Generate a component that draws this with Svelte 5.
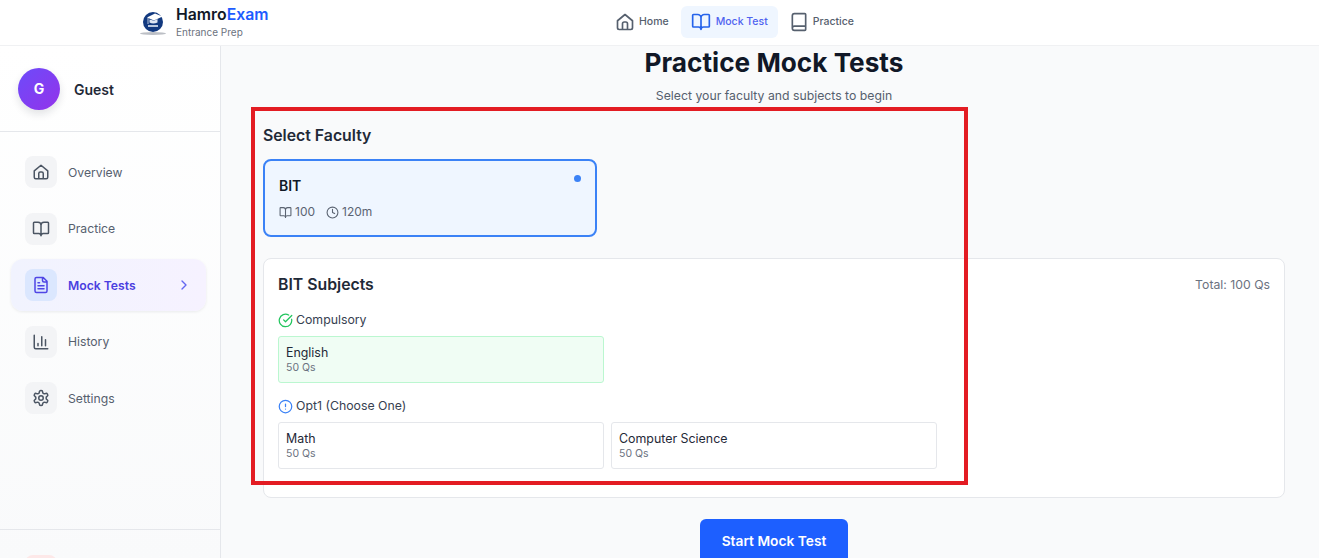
<script>
  const navLinks = [
    { label: 'Home', icon: 'home' },
    { label: 'Mock Test', icon: 'open', active: true },
    { label: 'Practice', icon: 'book' }
  ];

  const sideLinks = [
    { label: 'Overview', icon: 'home' },
    { label: 'Practice', icon: 'open' },
    { label: 'Mock Tests', icon: 'file', active: true },
    { label: 'History', icon: 'chart' },
    { label: 'Settings', icon: 'gear' }
  ];

  const icons = {
    home: 'M3 10.5 12 3l9 7.5V19a2 2 0 0 1-2 2H5a2 2 0 0 1-2-2Z M9 21v-7a2 2 0 0 1 2-2h2a2 2 0 0 1 2 2v7',
    open: 'M12 7v14 M3 18a1 1 0 0 1-1-1V4a1 1 0 0 1 1-1h5a4 4 0 0 1 4 4 4 4 0 0 1 4-4h5a1 1 0 0 1 1 1v13a1 1 0 0 1-1 1h-6a3 3 0 0 0-3 3 3 3 0 0 0-3-3Z',
    book: 'M4 19.5v-15A2.5 2.5 0 0 1 6.5 2H19a1 1 0 0 1 1 1v18a1 1 0 0 1-1 1H6.5a2.5 2.5 0 0 1 0-5H20',
    file: 'M15 2H6a2 2 0 0 0-2 2v16a2 2 0 0 0 2 2h12a2 2 0 0 0 2-2V7Z M14 2v4a2 2 0 0 0 2 2h4 M10 9H8 M16 13H8 M16 17H8',
    chart: 'M3 3v16a2 2 0 0 0 2 2h16 M8 17v-3 M13 17V5 M18 17V9',
    gear: 'M12.22 2h-.44a2 2 0 0 0-2 2v.18a2 2 0 0 1-1 1.73l-.43.25a2 2 0 0 1-2 0l-.15-.08a2 2 0 0 0-2.73.73l-.22.38a2 2 0 0 0 .73 2.73l.15.1a2 2 0 0 1 1 1.72v.51a2 2 0 0 1-1 1.74l-.15.09a2 2 0 0 0-.73 2.73l.22.38a2 2 0 0 0 2.73.73l.15-.08a2 2 0 0 1 2 0l.43.25a2 2 0 0 1 1 1.73V20a2 2 0 0 0 2 2h.44a2 2 0 0 0 2-2v-.18a2 2 0 0 1 1-1.73l.43-.25a2 2 0 0 1 2 0l.15.08a2 2 0 0 0 2.73-.73l.22-.39a2 2 0 0 0-.73-2.73l-.15-.08a2 2 0 0 1-1-1.74v-.5a2 2 0 0 1 1-1.74l.15-.09a2 2 0 0 0 .73-2.73l-.22-.38a2 2 0 0 0-2.73-.73l-.15.08a2 2 0 0 1-2 0l-.43-.25a2 2 0 0 1-1-1.73V4a2 2 0 0 0-2-2Z M15 12a3 3 0 1 1-6 0 3 3 0 0 1 6 0Z',
    clock: 'M22 12a10 10 0 1 1-20 0 10 10 0 0 1 20 0Z M12 6v6l4 2',
    check: 'M21.8 10A10 10 0 1 1 17 3.3 M9 11l3 3L22 4',
    alert: 'M22 12a10 10 0 1 1-20 0 10 10 0 0 1 20 0Z M12 8v4 M12 16h.01',
    chevron: 'm9 18 6-6-6-6'
  };
</script>

{#snippet icon(name, size)}
  <svg width={size} height={size} viewBox="0 0 24 24" fill="none" stroke="currentColor" stroke-width="2" stroke-linecap="round" stroke-linejoin="round">
    <path d={icons[name]} />
  </svg>
{/snippet}

<div class="page">
  <header class="topbar">
    <div class="brand">
      <svg class="logo" width="30" height="30" viewBox="0 0 30 30">
        <ellipse cx="14" cy="25.500" rx="13" ry="1.500" fill="#8f959e" opacity="0.6" />
        <circle cx="14" cy="14" r="10" fill="#12397f" />
        <path d="M8 9.500 16 5.500 23.500 8.500 15 12.500Z" fill="#fff" />
        <path d="M10.500 11.500v3c2.500 1.300 5 1.300 8 0v-3.500l-3.500 1.800Z" fill="#dfe6f2" />
        <path d="M9 10v6" stroke="#fff" stroke-width="0.700" />
        <rect x="9" y="17" width="10" height="2" fill="#b9c7de" />
      </svg>
      <div>
        <div class="brand-name">Hamro<span>Exam</span></div>
        <div class="brand-sub">Entrance Prep</div>
      </div>
    </div>
    <nav class="topnav">
      {#each navLinks as link}
        <div class="toplink" class:active={link.active}>
          {@render icon(link.icon, 20)}
          <span>{link.label}</span>
        </div>
      {/each}
    </nav>
  </header>

  <div class="body">
    <aside class="sidebar">
      <div class="user">
        <div class="avatar">G</div>
        <div class="username">Guest</div>
      </div>
      <nav class="sidenav">
        {#each sideLinks as link}
          <div class="sidelink" class:active={link.active}>
            <div class="sideicon">{@render icon(link.icon, 18)}</div>
            <span>{link.label}</span>
            {#if link.active}
              <div class="chev">{@render icon('chevron', 16)}</div>
            {/if}
          </div>
        {/each}
      </nav>
      <div class="sidefoot">
        <div class="logout"></div>
      </div>
    </aside>

    <main class="main">
      <h1>Practice Mock Tests</h1>
      <p class="lead">Select your faculty and subjects to begin</p>

      <h2>Select Faculty</h2>
      <div class="faculty">
        <div class="fac-card">
          <div class="fac-name">BIT</div>
          <div class="fac-meta">
            <span>{@render icon('open', 13)} 100</span>
            <span>{@render icon('clock', 13)} 120m</span>
          </div>
          <i class="dot"></i>
        </div>
      </div>

      <section class="subjects">
        <div class="subj-head">
          <h3>BIT Subjects</h3>
          <span>Total: 100 Qs</span>
        </div>

        <div class="group-label">
          <span class="green">{@render icon('check', 15)}</span>
          Compulsory
        </div>
        <div class="grid">
          <div class="subject picked">
            <div class="subject-name">English</div>
            <div class="subject-qs">50 Qs</div>
          </div>
        </div>

        <div class="group-label second">
          <span class="blue">{@render icon('alert', 15)}</span>
          Opt1 (Choose One)
        </div>
        <div class="grid">
          <div class="subject">
            <div class="subject-name">Math</div>
            <div class="subject-qs">50 Qs</div>
          </div>
          <div class="subject">
            <div class="subject-name">Computer Science</div>
            <div class="subject-qs">50 Qs</div>
          </div>
        </div>
      </section>

      <div class="actions">
        <button class="start">Start Mock Test</button>
      </div>
    </main>
  </div>

  <div class="annotation"></div>
</div>

<style>
  :global(body) {
    margin: 0;
    overflow: hidden;
  }

  .page {
    position: relative;
    width: 1319px;
    height: 558px;
    overflow: hidden;
    background: #f9fafb;
    font-family: Inter, 'Liberation Sans', sans-serif;
    color: #111827;
  }

  .topbar {
    height: 46px;
    box-sizing: border-box;
    display: flex;
    align-items: center;
    background: #fff;
    border-bottom: 1px solid #f0f1f3;
    padding-left: 139px;
  }

  .brand {
    display: flex;
    align-items: center;
    gap: 7px;
    width: 461px;
  }

  .logo {
    flex: none;
  }

  .brand-name {
    font-size: 15.800px;
    font-weight: 600;
    line-height: 18px;
    color: #111827;
  }

  .brand-name span {
    color: #1d5cff;
  }

  .brand-sub {
    font-size: 10px;
    line-height: 13px;
    color: #6b7280;
    margin-top: 2px;
  }

  .topnav {
    display: flex;
    align-items: center;
    gap: 3px;
    margin-top: -1px;
  }

  .toplink {
    display: flex;
    align-items: center;
    gap: 5px;
    height: 32px;
    padding: 0 10px;
    border-radius: 6px;
    font-size: 10.500px;
    font-weight: 500;
    color: #56606e;
  }

  .toplink span {
    margin-top: -2px;
  }

  .toplink:first-child {
    padding-left: 15px;
    padding-right: 9px;
    gap: 4px;
  }

  .toplink:last-child {
    padding-left: 8px;
    gap: 4px;
  }

  .toplink.active {
    background: #eff6ff;
    color: #2563eb;
  }

  .toplink.active span {
    color: #4f63f0;
  }

  .body {
    display: flex;
    height: 512px;
  }

  .sidebar {
    width: 221px;
    flex: none;
    box-sizing: border-box;
    display: flex;
    flex-direction: column;
    background: linear-gradient(180deg, #ffffff, #f9fafb);
    border-right: 1px solid #e5e7eb;
  }

  .user {
    height: 86px;
    box-sizing: border-box;
    display: flex;
    align-items: center;
    gap: 14px;
    padding: 0 18px;
    border-bottom: 1px solid #e5e7eb;
  }

  .avatar {
    width: 42px;
    height: 42px;
    border-radius: 50%;
    display: flex;
    align-items: center;
    justify-content: center;
    background: linear-gradient(135deg, #6d4bfa, #9333ea);
    color: #fff;
    font-size: 14px;
    font-weight: 700;
    box-shadow: 0 4px 8px rgba(17, 24, 39, 0.12);
  }

  .username {
    font-size: 14px;
    font-weight: 600;
    color: #1f2937;
    margin-top: 2px;
  }

  .sidenav {
    flex: 1;
    padding: 14px 14px 0 11px;
    display: flex;
    flex-direction: column;
    gap: 4.500px;
  }

  .sidelink {
    height: 52px;
    display: flex;
    align-items: center;
    gap: 11px;
    padding: 0 14px;
    border-radius: 12px;
    font-size: 12.200px;
    color: #56606e;
  }

  .sidelink.active {
    background: linear-gradient(90deg, #f1f3fe, #f6f2ff);
    box-shadow: 0 1px 3px rgba(17, 24, 39, 0.08);
    color: #4a3fe0;
    font-weight: 600;
  }

  .sideicon {
    width: 32px;
    height: 32px;
    border-radius: 8px;
    background: #f3f4f6;
    display: flex;
    align-items: center;
    justify-content: center;
    color: #4b5563;
  }

  .active .sideicon {
    background: #dbe7fe;
    color: #4f46e5;
  }

  .chev {
    margin-left: auto;
    display: flex;
    color: #6366f1;
  }

  .sidefoot {
    height: 29px;
    box-sizing: border-box;
    border-top: 1px solid #e5e7eb;
    padding: 25px 0 0 25px;
    overflow: hidden;
  }

  .logout {
    width: 32px;
    height: 32px;
    border-radius: 8px;
    background: #fde8e8;
  }

  .main {
    flex: 1;
    min-width: 0;
    padding: 0 34px 0 42px;
  }

  h1 {
    margin: 0;
    text-align: center;
    font-size: 26.200px;
    line-height: 34px;
    font-weight: 700;
    color: #111827;
  }

  .lead {
    margin: 8px 0 0;
    text-align: center;
    font-size: 12.250px;
    line-height: 16px;
    color: #56606e;
  }

  h2 {
    margin: 22px 0 0;
    font-size: 15.800px;
    line-height: 20px;
    font-weight: 600;
    color: #1f2937;
  }

  .faculty {
    margin-top: 13px;
    display: grid;
    grid-template-columns: repeat(3, 1fr);
    gap: 10px;
  }

  .fac-card {
    position: relative;
    height: 78px;
    box-sizing: border-box;
    padding: 16px 14px;
    background: #eff6ff;
    border: 2px solid #3b82f6;
    border-radius: 8px;
  }

  .fac-name {
    font-size: 14px;
    line-height: 17px;
    font-weight: 600;
    color: #111827;
  }

  .fac-meta {
    display: flex;
    gap: 11px;
    margin-top: 10px;
    font-size: 12px;
    line-height: 16px;
    color: #5b6472;
  }

  .fac-meta span {
    display: flex;
    align-items: center;
    gap: 3px;
  }

  .dot {
    position: absolute;
    top: 14px;
    right: 14px;
    width: 7px;
    height: 7px;
    border-radius: 50%;
    background: #3b82f6;
  }

  .subjects {
    margin-top: 21px;
    height: 240px;
    box-sizing: border-box;
    padding: 15px 14px;
    background: #fff;
    border: 1px solid #e5e7eb;
    border-radius: 8px;
  }

  .subj-head {
    display: flex;
    justify-content: space-between;
    align-items: center;
    height: 20px;
  }

  h3 {
    margin: 0;
    font-size: 15.800px;
    font-weight: 600;
    color: #1f2937;
  }

  .subj-head span {
    font-size: 12.250px;
    color: #6b7280;
  }

  .group-label {
    display: flex;
    align-items: center;
    gap: 3px;
    margin-top: 18px;
    font-size: 12.300px;
    line-height: 16px;
    color: #374151;
  }

  .group-label.second {
    margin-top: 15px;
  }

  .group-label span {
    display: flex;
  }

  .green {
    color: #22c55e;
  }

  .blue {
    color: #3b82f6;
  }

  .grid {
    display: grid;
    grid-template-columns: repeat(3, 326px);
    gap: 7px;
    margin-top: 8px;
  }

  .subject {
    height: 47px;
    box-sizing: border-box;
    padding: 8px 7px;
    border: 1px solid #e5e7eb;
    border-radius: 3px;
    background: #fff;
  }

  .subject.picked {
    background: #f0fdf4;
    border-color: #bbf7d0;
  }

  .subject-name {
    font-size: 12.400px;
    line-height: 16px;
    color: #1f2937;
  }

  .subject-qs {
    font-size: 10.500px;
    line-height: 13px;
    color: #6b7280;
  }

  .actions {
    display: flex;
    justify-content: center;
    margin-top: 21px;
  }

  .start {
    width: 148px;
    height: 44px;
    border: 0;
    border-radius: 6px;
    background: #1d5fff;
    color: #fff;
    font-family: inherit;
    font-size: 13.750px;
    font-weight: 600;
  }

  .annotation {
    position: absolute;
    left: 251px;
    top: 107px;
    width: 717px;
    height: 378px;
    box-sizing: border-box;
    border: 4px solid #e31c23;
    pointer-events: none;
  }
</style>
